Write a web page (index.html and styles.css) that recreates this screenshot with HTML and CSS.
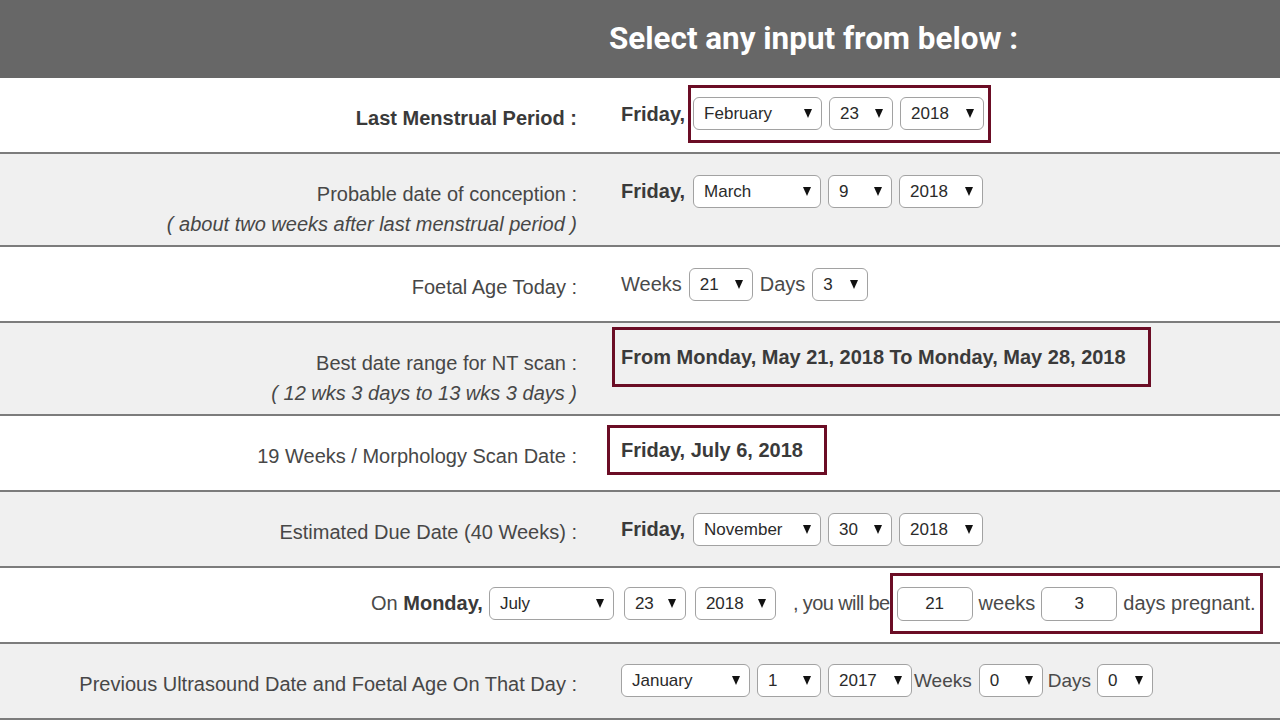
FILE: index.html
```html
<!DOCTYPE html>
<html>
<head>
<meta charset="utf-8">
<title>Pregnancy Calculator</title>
<link rel="stylesheet" href="styles.css">
</head>
<body>
<div class="page">
  <header class="head">Select any input from below :</header>

  <div class="row r1">
    <div class="lbl strong">Last Menstrual Period :</div>
    <div class="val">
      <b class="day">Friday,</b>
      <div class="box box-lmp">
        <span class="sel w-month"><span>February</span><i class="arr"></i></span>
        <span class="sel w-day"><span>23</span><i class="arr"></i></span>
        <span class="sel w-year"><span>2018</span><i class="arr"></i></span>
      </div>
    </div>
  </div>

  <div class="row tall grey">
    <div class="lbl">Probable date of conception :<br><em>( about two weeks after last menstrual period )</em></div>
    <div class="val">
      <b class="day">Friday,</b>
      <span class="sel w-month m128"><span>March</span><i class="arr"></i></span>
      <span class="sel w-day"><span>9</span><i class="arr"></i></span>
      <span class="sel w-year"><span>2018</span><i class="arr"></i></span>
    </div>
  </div>

  <div class="row">
    <div class="lbl">Foetal Age Today :</div>
    <div class="val">
      <span class="txt">Weeks</span>
      <span class="sel w-wk"><span>21</span><i class="arr"></i></span>
      <span class="txt">Days</span>
      <span class="sel w-dy"><span>3</span><i class="arr"></i></span>
    </div>
  </div>

  <div class="row tall grey r4">
    <div class="lbl">Best date range for NT scan :<br><em>( 12 wks 3 days to 13 wks 3 days )</em></div>
    <div class="val">
      <div class="box box-nt">From Monday, May 21, 2018 To Monday, May 28, 2018</div>
    </div>
  </div>

  <div class="row r5">
    <div class="lbl">19 Weeks / Morphology Scan Date :</div>
    <div class="val">
      <div class="box box-morph">Friday, July 6, 2018</div>
    </div>
  </div>

  <div class="row grey">
    <div class="lbl">Estimated Due Date (40 Weeks) :</div>
    <div class="val">
      <b class="day">Friday,</b>
      <span class="sel w-month m128"><span>November</span><i class="arr"></i></span>
      <span class="sel w-day"><span>30</span><i class="arr"></i></span>
      <span class="sel w-year"><span>2018</span><i class="arr"></i></span>
    </div>
  </div>

  <div class="row full">
    <span class="txt on">On <b>Monday,</b></span>
    <span class="sel w-month2"><span>July</span><i class="arr"></i></span>
    <span class="sel w-day2"><span>23</span><i class="arr"></i></span>
    <span class="sel w-year2"><span>2018</span><i class="arr"></i></span>
    <span class="txt comma">, you will be</span>
    <div class="box box-preg">
      <span class="inp">21</span>
      <span class="txt">weeks</span>
      <span class="inp">3</span>
      <span class="txt">days pregnant.</span>
    </div>
  </div>

  <div class="row grey r8">
    <div class="lbl">Previous Ultrasound Date and Foetal Age On That Day :</div>
    <div class="val">
      <span class="sel w-month"><span>January</span><i class="arr"></i></span>
      <span class="sel w-day"><span>1</span><i class="arr"></i></span>
      <span class="sel w-year"><span>2017</span><i class="arr"></i></span>
      <span class="txt small wk">Weeks</span>
      <span class="sel w-wk"><span>0</span><i class="arr"></i></span>
      <span class="txt small dy">Days</span>
      <span class="sel w-dy"><span>0</span><i class="arr"></i></span>
    </div>
  </div>
</div>
</body>
</html>
```

FILE: styles.css
```css
html, body {
  margin: 0;
  padding: 0;
  background: #ffffff;
}

.page {
  width: 1280px;
  font-family: "Liberation Sans", Arial, sans-serif;
  color: #444;
}

.head {
  height: 78px;
  line-height: 78px;
  background: #676767;
  color: #ffffff;
  font-family: Roboto, "Liberation Sans", sans-serif;
  font-weight: 700;
  font-size: 31.4px;
  padding-left: 609px;
  box-sizing: border-box;
}

.row {
  display: grid;
  grid-template-columns: 577px 1fr;
  column-gap: 44px;
  height: 76px;
  box-sizing: border-box;
  border-bottom: 2px solid #7c7c7c;
  background: #ffffff;
}

.row.tall {
  height: 93px;
}

.row.grey {
  background: #f0f0f0;
}

.lbl {
  padding-top: 25px;
  line-height: 30px;
  font-size: 20px;
  text-align: right;
  color: #474747;
  white-space: nowrap;
}

.lbl.strong {
  font-weight: 700;
  color: #3a3a3a;
}

.lbl em {
  font-style: italic;
}

.val {
  padding-top: 21px;
  display: flex;
  align-items: center;
  align-self: start;
  gap: 7px;
  font-size: 20px;
}

.day {
  font-weight: 700;
  color: #3a3a3a;
  font-size: 20px;
  margin-right: 1px;
}

.txt {
  font-size: 20px;
  color: #4a4a4a;
  white-space: nowrap;
}

.txt b {
  color: #3a3a3a;
}

.txt.small {
  font-size: 19px;
}

.r8 .wk {
  margin-left: -5px;
}

.r8 .dy {
  margin-left: -2px;
  margin-right: -1px;
}

.sel {
  display: inline-flex;
  flex: none;
  align-items: center;
  justify-content: space-between;
  box-sizing: border-box;
  height: 33px;
  padding: 0 9px 0 10px;
  border: 1px solid #a2a2a2;
  border-radius: 6px;
  background: #ffffff;
  font-size: 17px;
  color: #2a2a2a;
}

.arr {
  width: 0;
  height: 0;
  border-left: 4.5px solid transparent;
  border-right: 4.5px solid transparent;
  border-top: 9px solid #111111;
}

.w-month { width: 129px; }
.w-month.m128 { width: 128px; }
.w-day { width: 64px; }
.w-year { width: 84px; }
.w-wk { width: 64px; }
.w-dy { width: 56px; }
.w-month2 { width: 125px; margin-right: 10px; }
.w-day2 { width: 62px; margin-right: 9px; }
.w-year2 { width: 81px; }

.box {
  box-sizing: border-box;
  border: 3px solid #6b0d25;
}

.box-lmp {
  display: flex;
  align-items: center;
  gap: 7px;
  margin-left: -5px;
  padding: 9px 4px 10px 2px;
}

.r1 .val {
  padding-top: 7px;
}

.r4 .val {
  padding-top: 4px;
}

.box-nt {
  height: 60px;
  line-height: 54px;
  padding: 0 22px 0 6px;
  margin-left: -9px;
  font-weight: 700;
  color: #3a3a3a;
  white-space: nowrap;
}

.r5 .val {
  padding-top: 9px;
}

.box-morph {
  height: 50px;
  line-height: 44px;
  padding: 0 21px 0 11px;
  margin-left: -14px;
  font-weight: 700;
  color: #3a3a3a;
  white-space: nowrap;
}

.row.full {
  display: flex;
  align-items: center;
  column-gap: 0;
  padding-left: 371px;
  padding-bottom: 3px;
}

.on {
  margin-right: 6px;
}

.comma {
  margin-left: 17px;
  letter-spacing: -0.6px;
}

.box-preg {
  display: flex;
  flex: none;
  align-items: center;
  gap: 6px;
  height: 61px;
  padding: 0 4px 0 4px;
}

.inp {
  display: inline-flex;
  flex: none;
  align-items: center;
  justify-content: center;
  box-sizing: border-box;
  width: 76px;
  height: 34px;
  border: 1px solid #a2a2a2;
  border-radius: 6px;
  background: #ffffff;
  font-size: 17px;
  color: #2a2a2a;
}

.r8 .val {
  padding-top: 20px;
}
```
